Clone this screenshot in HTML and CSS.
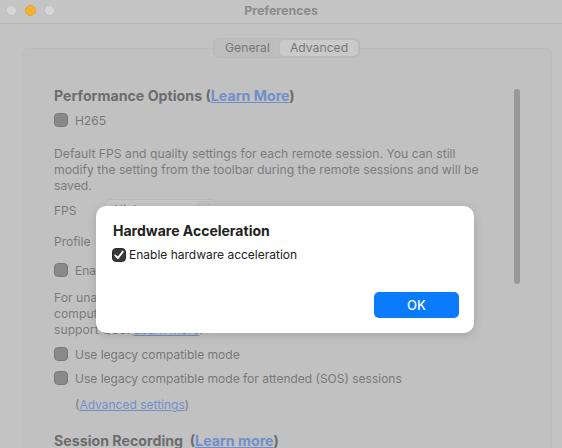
FILE: index.html
```html
<!DOCTYPE html>
<html lang="en">
<head>
    <meta charset="UTF-8">
    <meta name="viewport" content="width=device-width, initial-scale=1.0">
    <title>Preferences</title>
    <link rel="stylesheet" href="styles.css">
</head>
<body>
    <div class="window">
        <div class="titlebar">
            <div class="lights">
                <span class="light"></span>
                <span class="light light-min"></span>
                <span class="light"></span>
            </div>
            <div class="title">Preferences</div>
        </div>

        <div class="content">
            <div class="tabs">
                <span class="tab">General</span>
                <span class="tab active">Advanced</span>
            </div>

            <div class="group">
                <div class="scroller"></div>

                <h2>Performance Options (<a href="#">Learn More</a>)</h2>
                <label class="check-row h265-row"><span class="box"></span>H265</label>

                <p class="note first-note">Default FPS and quality settings for each remote session. You can still modify the setting from the toolbar during the remote sessions and will be saved.</p>

                <div class="field fps">
                    <span class="field-label">FPS</span>
                    <span class="select">High<span class="chev"></span></span>
                </div>
                <div class="field profile">
                    <span class="field-label">Profile</span>
                    <span class="select">Balanced<span class="chev"></span></span>
                </div>

                <label class="check-row enable-row"><span class="box"></span>Enable hardware acceleration</label>

                <p class="note second-note">For unattended sessions, hardware acceleration is used on<br>computers with a compatible graphics card. The GPU must<br>support QoS. <a href="#">Learn more</a>.</p>

                <label class="check-row legacy-row"><span class="box"></span>Use legacy compatible mode</label>
                <label class="check-row sos-row"><span class="box"></span>Use legacy compatible mode for attended (SOS) sessions</label>
                <div class="adv">(<a href="#">Advanced settings</a>)</div>

                <h2 class="recording">Session Recording&nbsp; (<a href="#">Learn more</a>)</h2>
            </div>
        </div>

        <div class="backdrop"></div>

        <div class="dialog">
            <div class="dialog-title">Hardware Acceleration</div>
            <label class="dialog-check">
                <span class="box checked">
                    <svg width="12" height="12" viewBox="0 0 12 12"><path d="M2.3 6.4 L4.9 9.1 L9.8 2.6" fill="none" stroke="#fff" stroke-width="1.8" stroke-linecap="round" stroke-linejoin="round"/></svg>
                </span>Enable hardware acceleration
            </label>
            <div class="dialog-actions">
                <button class="ok">OK</button>
            </div>
        </div>
    </div>
</body>
</html>
```

FILE: styles.css
```css
* {
    box-sizing: border-box;
}
body {
    margin: 0;
    font-family: Inter, "Noto Sans", sans-serif;
    font-size: 12px;
    color: #444;
}
.window {
    position: relative;
    width: 562px;
    height: 448px;
    overflow: hidden;
    background-color: #c5c5c5;
}
.titlebar {
    height: 24px;
    padding-bottom: 3px;
    border-bottom: 1px solid #b3b3b3;
    display: flex;
    align-items: center;
    position: relative;
}
.lights {
    display: flex;
    gap: 8px;
    padding-left: 6px;
}
.light {
    width: 11px;
    height: 11px;
    border-radius: 50%;
    background-color: #d7d7da;
    border: 1px solid #c0c0c3;
}
.light-min {
    background-color: #f4b433;
    border-color: #e1a12a;
}
.title {
    position: absolute;
    left: 0;
    right: 0;
    top: 3px;
    text-align: center;
    font-weight: 700;
    font-size: 12.4px;
    color: #8b8b8b;
}

/* window content, dimmed by the sheet backdrop */
.content {
    background-color: #ececec;
    height: 424px;
    padding: 14px 10px 0 22px;
    position: relative;
    z-index: 0;
}
.tabs {
    display: flex;
    width: max-content;
    margin: 0 auto 0 191px;
    padding: 1px;
    background-color: #dedede;
    border: 1px solid #d2d2d2;
    border-radius: 6px;
    position: relative;
    z-index: 1;
}
.tab {
    padding: 0 10px;
    color: #404040;
    font-size: 12.2px;
    line-height: 16px;
}
.tab.active {
    background-color: #fbfbfb;
    border-radius: 5px;
    box-shadow: 0 0 0 1px #d8d8d8, 0 1px 1px rgba(0,0,0,0.1);
}
.group {
    margin-top: -10px;
    height: 420px;
    border: 1px solid #dcdcdc;
    border-radius: 6px;
    background-color: #e7e7e7;
    padding: 37px 40px 0 31px;
    position: relative;
}
.scroller {
    position: absolute;
    right: 31px;
    top: 40px;
    width: 6px;
    height: 195px;
    border-radius: 3px;
    background-color: #8d8d8d;
}
h2 {
    margin: 0;
    font-size: 14.2px;
    line-height: 20px;
    font-weight: 700;
    color: #2a2a2a;
}
a {
    color: #3478f6;
}
.check-row {
    display: flex;
    align-items: center;
    gap: 7px;
    height: 20px;
}
.h265-row {
    margin-top: 4px;
}
.box {
    width: 14px;
    height: 14px;
    border-radius: 4px;
    background-color: #6a6a6a;
    border: 1px solid #4a4a4a;
    flex-shrink: 0;
}
.note {
    margin: 0;
    max-width: 432px;
    font-size: 12.2px;
    line-height: 16px;
    color: #4a4a4a;
}
.first-note {
    margin-top: 16px;
}
.field {
    display: flex;
    align-items: center;
    height: 22px;
}
.fps {
    margin-top: 5px;
}
.profile {
    margin-top: 9px;
}
.field-label {
    width: 51px;
}
.select {
    position: relative;
    width: 110px;
    height: 22px;
    line-height: 20px;
    padding-left: 8px;
    background-color: #f4f4f4;
    border: 1px solid #d6d6d6;
    border-radius: 5px;
}
.chev {
    position: absolute;
    right: 1px;
    top: 1px;
    width: 17px;
    height: 18px;
    border-radius: 4px;
    background-color: #e2e2e2;
}
.enable-row {
    margin-top: 8px;
}
.second-note {
    margin-top: 10px;
}
.legacy-row {
    margin-top: 6px;
}
.sos-row {
    margin-top: 4px;
}
.adv {
    margin-top: 7px;
    padding-left: 21px;
    line-height: 20px;
}
.recording {
    margin-top: 16px;
}

.backdrop {
    position: absolute;
    left: 0;
    right: 0;
    top: 24px;
    bottom: 0;
    background-color: rgba(163, 163, 163, 0.55);
}

/* alert sheet */
.dialog {
    position: absolute;
    left: 96px;
    top: 206px;
    width: 378px;
    height: 127px;
    background-color: #fff;
    border-radius: 10px;
    box-shadow: 0 2px 10px rgba(0, 0, 0, 0.15);
    padding: 15px 15px 15px 17px;
    display: flex;
    flex-direction: column;
}
.dialog-title {
    font-size: 14px;
    font-weight: 700;
    line-height: 20px;
    color: #222;
}
.dialog-check {
    display: flex;
    align-items: center;
    gap: 3px;
    margin-top: 5px;
    margin-left: -1px;
    line-height: 18px;
    color: #222;
}
.box.checked {
    background-color: #3a3a3a;
    border-color: #2a2a2a;
    display: flex;
    align-items: center;
    justify-content: center;
}
.dialog-actions {
    margin-top: auto;
    display: flex;
    justify-content: flex-end;
}
.ok {
    width: 85px;
    height: 26px;
    border: none;
    border-radius: 5px;
    background-color: #0a7aff;
    color: #fff;
    font-family: inherit;
    font-size: 13px;
    font-weight: 500;
}
```
